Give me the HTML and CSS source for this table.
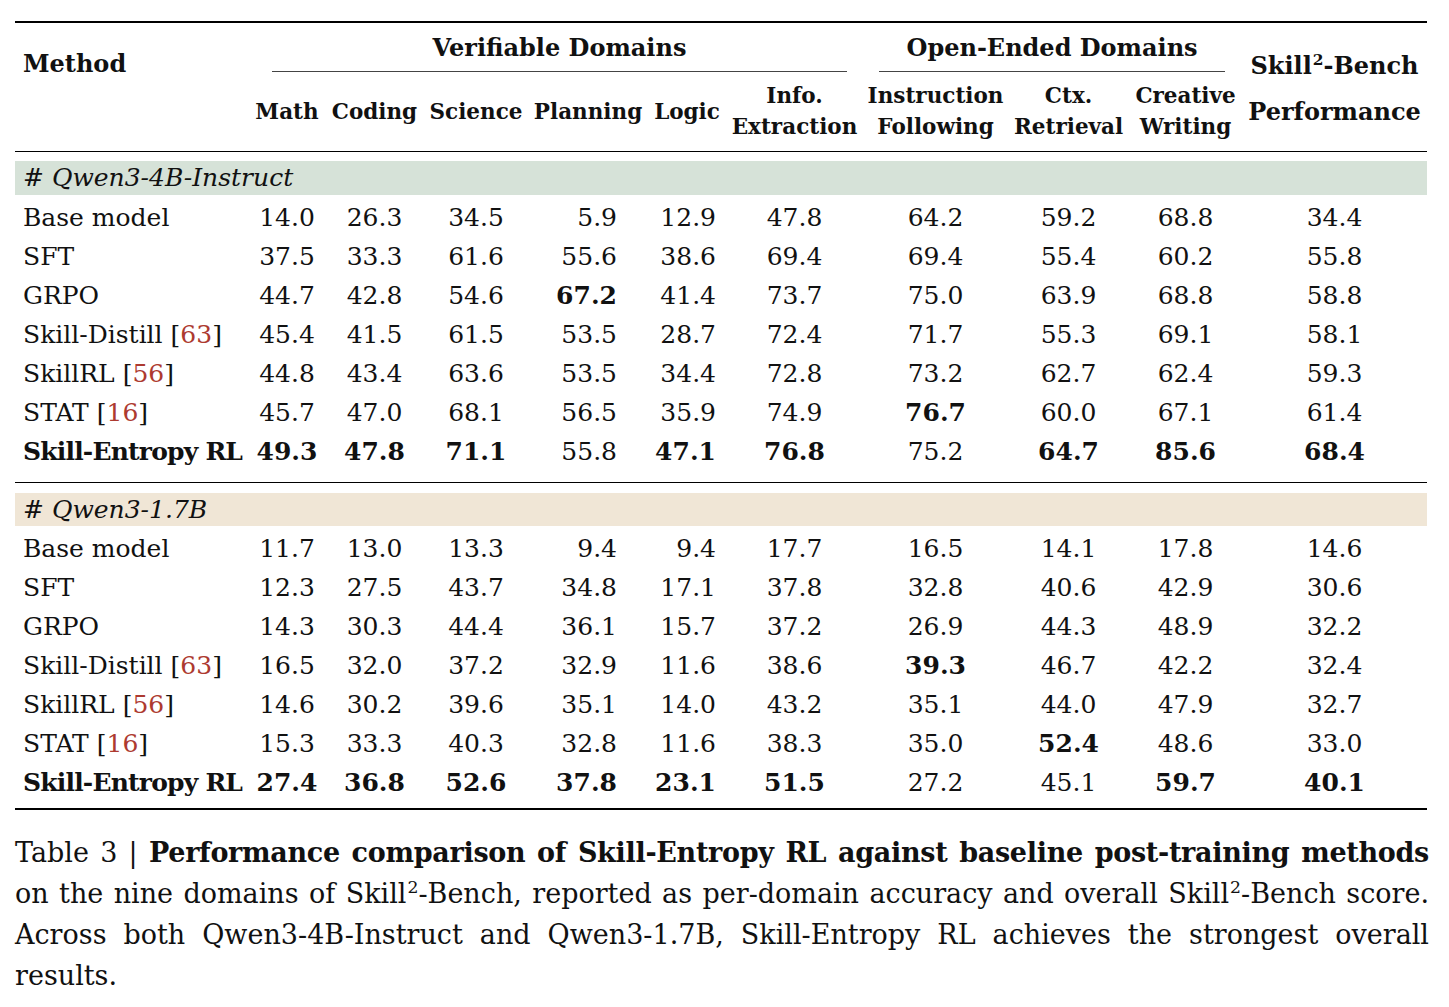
FILE: index.html
```html
<!DOCTYPE html>
<html lang="en">
<head>
    <meta charset="UTF-8">
    <meta name="viewport" content="width=device-width, initial-scale=1.0">
    <title>Table 3 - Skill-Entropy RL</title>
    <link rel="stylesheet" href="styles.css">
</head>
<body>
    <div class="page">
        <table class="results">
            <colgroup>
                <col class="c-method">
                <col class="c-math">
                <col class="c-coding">
                <col class="c-science">
                <col class="c-planning">
                <col class="c-logic">
                <col class="c-info">
                <col class="c-instr">
                <col class="c-ctx">
                <col class="c-creative">
                <col class="c-perf">
            </colgroup>
            <thead>
                <tr class="head-top">
                    <th rowspan="2" class="method-head">Method</th>
                    <th colspan="6" class="group-head"><div class="cmid verif">Verifiable Domains</div></th>
                    <th colspan="3" class="group-head"><div class="cmid open">Open-Ended Domains</div></th>
                    <th rowspan="2" class="perf-head">
                        <div>Skill<sup>2</sup>-Bench</div>
                        <div class="perf-line">Performance</div>
                    </th>
                </tr>
                <tr class="head-sub">
                    <th>Math</th>
                    <th>Coding</th>
                    <th>Science</th>
                    <th>Planning</th>
                    <th>Logic</th>
                    <th>Info.<br>Extraction</th>
                    <th>Instruction<br>Following</th>
                    <th>Ctx.<br>Retrieval</th>
                    <th>Creative<br>Writing</th>
                </tr>
            </thead>

            <!-- Qwen3-4B-Instruct -->
            <tbody>
                <tr class="band first">
                    <td colspan="11"><div class="band-label green"># Qwen3-4B-Instruct</div></td>
                </tr>
                <tr>
                    <td>Base model</td>
                    <td>14.0</td><td>26.3</td><td>34.5</td><td><span class="ph">0</span>5.9</td><td>12.9</td>
                    <td>47.8</td><td>64.2</td><td>59.2</td><td>68.8</td><td>34.4</td>
                </tr>
                <tr>
                    <td>SFT</td>
                    <td>37.5</td><td>33.3</td><td>61.6</td><td>55.6</td><td>38.6</td>
                    <td>69.4</td><td>69.4</td><td>55.4</td><td>60.2</td><td>55.8</td>
                </tr>
                <tr>
                    <td>GRPO</td>
                    <td>44.7</td><td>42.8</td><td>54.6</td><td><b>67.2</b></td><td>41.4</td>
                    <td>73.7</td><td>75.0</td><td>63.9</td><td>68.8</td><td>58.8</td>
                </tr>
                <tr>
                    <td>Skill-Distill <span class="cite">[<a>63</a>]</span></td>
                    <td>45.4</td><td>41.5</td><td>61.5</td><td>53.5</td><td>28.7</td>
                    <td>72.4</td><td>71.7</td><td>55.3</td><td>69.1</td><td>58.1</td>
                </tr>
                <tr>
                    <td>SkillRL <span class="cite">[<a>56</a>]</span></td>
                    <td>44.8</td><td>43.4</td><td>63.6</td><td>53.5</td><td>34.4</td>
                    <td>72.8</td><td>73.2</td><td>62.7</td><td>62.4</td><td>59.3</td>
                </tr>
                <tr>
                    <td>STAT <span class="cite">[<a>16</a>]</span></td>
                    <td>45.7</td><td>47.0</td><td>68.1</td><td>56.5</td><td>35.9</td>
                    <td>74.9</td><td><b>76.7</b></td><td>60.0</td><td>67.1</td><td>61.4</td>
                </tr>
                <tr class="ours first-end">
                    <td><b>Skill-Entropy RL</b></td>
                    <td><b>49.3</b></td><td><b>47.8</b></td><td><b>71.1</b></td><td>55.8</td><td><b>47.1</b></td>
                    <td><b>76.8</b></td><td>75.2</td><td><b>64.7</b></td><td><b>85.6</b></td><td><b>68.4</b></td>
                </tr>
            </tbody>

            <!-- Qwen3-1.7B -->
            <tbody>
                <tr class="band second">
                    <td colspan="11"><div class="band-label sand"># Qwen3-1.7B</div></td>
                </tr>
                <tr>
                    <td>Base model</td>
                    <td>11.7</td><td>13.0</td><td>13.3</td><td><span class="ph">0</span>9.4</td><td><span class="ph">0</span>9.4</td>
                    <td>17.7</td><td>16.5</td><td>14.1</td><td>17.8</td><td>14.6</td>
                </tr>
                <tr>
                    <td>SFT</td>
                    <td>12.3</td><td>27.5</td><td>43.7</td><td>34.8</td><td>17.1</td>
                    <td>37.8</td><td>32.8</td><td>40.6</td><td>42.9</td><td>30.6</td>
                </tr>
                <tr>
                    <td>GRPO</td>
                    <td>14.3</td><td>30.3</td><td>44.4</td><td>36.1</td><td>15.7</td>
                    <td>37.2</td><td>26.9</td><td>44.3</td><td>48.9</td><td>32.2</td>
                </tr>
                <tr>
                    <td>Skill-Distill <span class="cite">[<a>63</a>]</span></td>
                    <td>16.5</td><td>32.0</td><td>37.2</td><td>32.9</td><td>11.6</td>
                    <td>38.6</td><td><b>39.3</b></td><td>46.7</td><td>42.2</td><td>32.4</td>
                </tr>
                <tr>
                    <td>SkillRL <span class="cite">[<a>56</a>]</span></td>
                    <td>14.6</td><td>30.2</td><td>39.6</td><td>35.1</td><td>14.0</td>
                    <td>43.2</td><td>35.1</td><td>44.0</td><td>47.9</td><td>32.7</td>
                </tr>
                <tr>
                    <td>STAT <span class="cite">[<a>16</a>]</span></td>
                    <td>15.3</td><td>33.3</td><td>40.3</td><td>32.8</td><td>11.6</td>
                    <td>38.3</td><td>35.0</td><td><b>52.4</b></td><td>48.6</td><td>33.0</td>
                </tr>
                <tr class="ours last-end">
                    <td><b>Skill-Entropy RL</b></td>
                    <td><b>27.4</b></td><td><b>36.8</b></td><td><b>52.6</b></td><td><b>37.8</b></td><td><b>23.1</b></td>
                    <td><b>51.5</b></td><td>27.2</td><td>45.1</td><td><b>59.7</b></td><td><b>40.1</b></td>
                </tr>
            </tbody>
        </table>

        <p class="caption">
            Table 3 | <b>Performance comparison of Skill-Entropy RL against baseline post-training methods</b>
            on the nine domains of Skill<sup>2</sup>-Bench, reported as per-domain accuracy and overall Skill<sup>2</sup>-Bench score.
            Across both Qwen3-4B-Instruct and Qwen3-1.7B, Skill-Entropy RL achieves the strongest overall results.
        </p>
    </div>
</body>
</html>
```

FILE: styles.css
```css
body {
    margin: 0;
    padding: 0;
    background-color: #ffffff;
    color: #111111;
    font-family: "DejaVu Serif", "Liberation Serif", serif;
}

.page {
    width: 1412px;
    padding: 21px 0 0 15px;
}

/* Main table */
.results {
    width: 1412px;
    table-layout: fixed;
    border-collapse: separate;
    border-spacing: 0;
    font-size: 25px;
}

.c-method { width: 234px; }
.c-math { width: 76px; }
.c-coding { width: 99px; }
.c-science { width: 104px; }
.c-planning { width: 120px; }
.c-logic { width: 78px; }
.c-info { width: 137px; }
.c-instr { width: 145px; }
.c-ctx { width: 121px; }
.c-creative { width: 113px; }
.c-perf { width: 185px; }

.results th,
.results td {
    padding: 0;
    text-align: center;
    white-space: nowrap;
}

/* Header */
.results thead th {
    font-size: 24px;
    font-weight: bold;
    line-height: 31px;
}

.head-top th {
    border-top: 2px solid #000;
    vertical-align: top;
}

.head-sub th,
.method-head,
.perf-head {
    border-bottom: 1px solid #000;
}

.results .head-sub th {
    font-size: 21.5px;
    padding: 8px 0 9px;
    vertical-align: middle;
}

.method-head {
    text-align: left !important;
    padding: 25px 0 0 8px !important;
}

.perf-head {
    padding-top: 27px !important;
}

.perf-line {
    margin-top: 15px;
}

.cmid {
    padding: 9px 0 8px;
    border-bottom: 1px solid #444;
}

.verif {
    margin: 0 16px 0 23px;
}

.open {
    margin: 0 17px 0 16px;
}

sup {
    font-size: 0.64em;
    line-height: 0;
    vertical-align: 0.6em;
    margin-left: 1px;
}

/* Body rows */
.results tbody td {
    line-height: 39px;
}

.results tbody td:first-child {
    text-align: left;
    padding-left: 8px;
}

.ours td:first-child b {
    letter-spacing: -0.8px;
}

.results tbody td:nth-child(5),
.results tbody td:nth-child(6) {
    text-align: right;
}

.results tbody td:nth-child(5) { padding-right: 31px; }
.results tbody td:nth-child(6) { padding-right: 10px; }

.ph {
    visibility: hidden;
}

.cite a {
    color: #ad3a30;
}

/* Group bands */
.results tbody tr.band.first td {
    padding: 9px 0 3px;
}

.results tbody tr.band.second td {
    border-top: 1px solid #000;
    padding: 10px 0 3px;
}

.band-label {
    font-style: italic;
    line-height: 34px;
    padding-left: 8px;
    text-align: left;
}

.band-label.green {
    background-color: #d6e2d8;
}

.band-label.sand {
    line-height: 33px;
    background-color: #f0e6d6;
}

.first-end td {
    padding-bottom: 11px;
}

.last-end td {
    padding-bottom: 6px;
    border-bottom: 2px solid #000;
}

/* Caption */
.caption {
    margin: 22px 0 0;
    width: 1414px;
    font-size: 27px;
    line-height: 41px;
    text-align: justify;
}

.caption b {
    letter-spacing: -0.3px;
}
```
